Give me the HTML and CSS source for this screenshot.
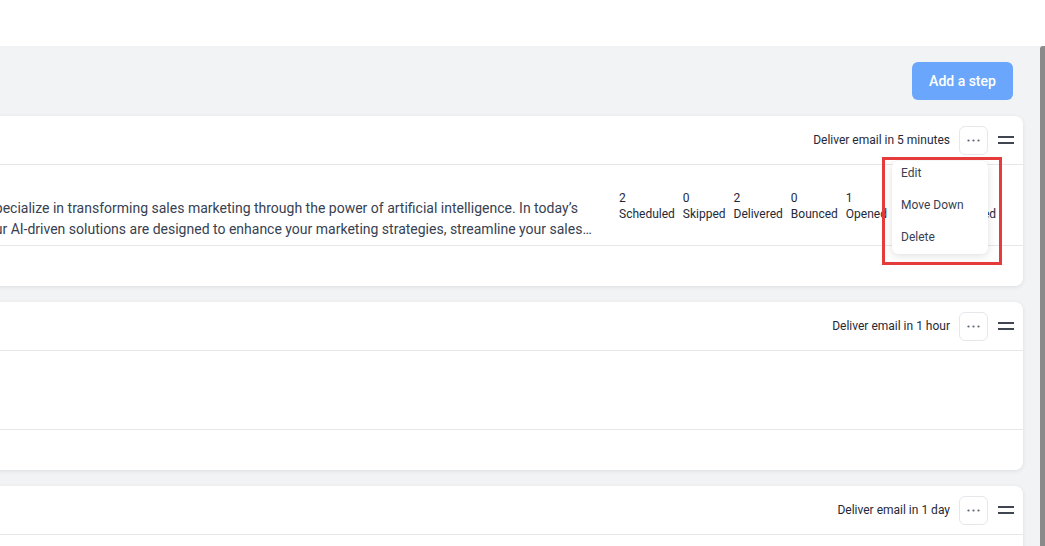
FILE: index.html
```html
<!DOCTYPE html>
<html lang="en">
<head>
<meta charset="utf-8">
<title>Sequence steps</title>
<link rel="stylesheet" href="styles.css">
</head>
<body>
<header class="topbar"></header>
<div class="main">
  <div class="content">
    <div class="toolbar">
      <button class="btn-primary" type="button">Add a step</button>
    </div>

    <section class="step">
      <div class="step-head">
        <span class="step-title">Step 1</span>
        <div class="step-actions">
          <span class="delay">Deliver email in 5 minutes</span>
          <div class="menu-wrap">
            <button class="icon-btn" type="button" aria-label="More">
              <svg width="13" height="3" viewBox="0 0 13 3"><circle cx="1.5" cy="1.5" r="1.1"/><circle cx="6.5" cy="1.5" r="1.1"/><circle cx="11.5" cy="1.5" r="1.1"/></svg>
            </button>
            <ul class="menu">
              <li class="menu-item">Edit</li>
              <li class="menu-item">Move Down</li>
              <li class="menu-item">Delete</li>
              <li class="highlight" aria-hidden="true"></li>
            </ul>
          </div>
          <span class="handle" aria-hidden="true"></span>
        </div>
      </div>
      <div class="step-body">
        <div class="email">
          <div class="subject">AI sales</div>
          <p class="preview">At Nexus AI Growth Labs, we specialize in transforming sales marketing through the power of artificial intelligence. In today’s fast-paced digital landscape, our AI-driven solutions are designed to enhance your marketing strategies, streamline your sales…</p>
        </div>
        <div class="stats">
          <div class="stat"><span>2</span><span>Scheduled</span></div>
          <div class="stat"><span>0</span><span>Skipped</span></div>
          <div class="stat"><span>2</span><span>Delivered</span></div>
          <div class="stat"><span>0</span><span>Bounced</span></div>
          <div class="stat"><span>1</span><span>Opened</span></div>
          <div class="stat"><span>0</span><span>Replied</span></div>
          <div class="stat"><span>0</span><span>Interested</span></div>
        </div>
      </div>
      <div class="step-foot"></div>
    </section>

    <section class="step">
      <div class="step-head">
        <span class="step-title">Step 2</span>
        <div class="step-actions">
          <span class="delay">Deliver email in 1 hour</span>
          <div class="menu-wrap">
            <button class="icon-btn" type="button" aria-label="More">
              <svg width="13" height="3" viewBox="0 0 13 3"><circle cx="1.5" cy="1.5" r="1.1"/><circle cx="6.5" cy="1.5" r="1.1"/><circle cx="11.5" cy="1.5" r="1.1"/></svg>
            </button>
          </div>
          <span class="handle" aria-hidden="true"></span>
        </div>
      </div>
      <div class="step-body"></div>
      <div class="step-foot"></div>
    </section>

    <section class="step">
      <div class="step-head">
        <span class="step-title">Step 3</span>
        <div class="step-actions">
          <span class="delay">Deliver email in 1 day</span>
          <div class="menu-wrap">
            <button class="icon-btn" type="button" aria-label="More">
              <svg width="13" height="3" viewBox="0 0 13 3"><circle cx="1.5" cy="1.5" r="1.1"/><circle cx="6.5" cy="1.5" r="1.1"/><circle cx="11.5" cy="1.5" r="1.1"/></svg>
            </button>
          </div>
          <span class="handle" aria-hidden="true"></span>
        </div>
      </div>
      <div class="step-body"></div>
      <div class="step-foot"></div>
    </section>
  </div>
  <div class="scrollbar"></div>
</div>
</body>
</html>
```
FILE: styles.css
```css
* { box-sizing: border-box; }

html, body {
  margin: 0;
  height: 100%;
  overflow: hidden;
}

body {
  font-family: Roboto, "Liberation Sans", Arial, sans-serif;
  color: #1f2937;
  background: #ffffff;
}

.topbar {
  height: 46px;
  background: #ffffff;
}

.main {
  display: flex;
  height: 500px;
  background: #f2f3f5;
  overflow: hidden;
}

.content {
  flex: 1;
  min-width: 0;
  margin-left: -211px;
  padding: 16px 17px 0 0;
  display: flex;
  flex-direction: column;
  gap: 16px;
}

.scrollbar {
  flex: 0 0 5px;
  background: #8a8a8a;
  border-radius: 3px 0 0 0;
}

.toolbar {
  display: flex;
  justify-content: flex-end;
  padding-right: 10px;
}

.btn-primary {
  height: 38px;
  width: 101px;
  border: 0;
  border-radius: 6px;
  background: #6aa7fc;
  color: #ffffff;
  font-family: inherit;
  font-size: 14px;
  font-weight: 500;
  padding: 0;
}

.step {
  flex: none;
  background: #ffffff;
  border-radius: 8px;
  box-shadow: 0 1px 4px rgba(0, 0, 0, 0.09);
}

.step-head {
  height: 49px;
  display: flex;
  align-items: center;
  justify-content: space-between;
  padding: 0 9px 0 16px;
  border-bottom: 1px solid #e5e7eb;
}

.step-title {
  font-size: 14px;
  font-weight: 500;
}

.step-actions {
  display: flex;
  align-items: center;
}

.delay {
  font-size: 12px;
  color: #1f2937;
  margin-right: 9px;
}

.menu-wrap {
  position: relative;
  margin-right: 10px;
}

.icon-btn {
  display: flex;
  align-items: center;
  justify-content: center;
  width: 29px;
  height: 29px;
  padding: 0;
  border: 1px solid #e5e7eb;
  border-radius: 6px;
  background: #ffffff;
  fill: #5b6370;
}

.handle {
  display: block;
  width: 16px;
  height: 8px;
  border-top: 2px solid #3f4652;
  border-bottom: 2px solid #3f4652;
}

.menu {
  position: absolute;
  top: 35px;
  right: 0;
  width: 96px;
  margin: 0;
  padding: 4px 0 9px;
  list-style: none;
  display: flex;
  flex-direction: column;
  gap: 16px;
  background: #ffffff;
  border-radius: 6px;
  box-shadow: 0 2px 8px rgba(0, 0, 0, 0.12), 0 0 1px rgba(0, 0, 0, 0.08);
  z-index: 5;
}

.menu-item {
  font-size: 12px;
  line-height: 16px;
  padding: 0 9px;
  color: #374151;
  white-space: nowrap;
}

.highlight {
  position: absolute;
  top: -4px;
  left: -10px;
  right: -14px;
  bottom: -11px;
  border: 3px solid #e53b3b;
  pointer-events: none;
}

.step-body {
  min-height: 79px;
  padding: 7px 16px 5px;
  display: flex;
  align-items: center;
  gap: 15px;
  border-bottom: 1px solid #e5e7eb;
}

.email {
  flex: 0 0 799px;
}

.subject {
  font-size: 14px;
  line-height: 20px;
  font-weight: 500;
  margin-bottom: 6px;
  color: #111827;
}

.preview {
  margin: 0;
  font-size: 14px;
  line-height: 21px;
  color: #374151;
}

.stats {
  display: flex;
  gap: 8px;
  white-space: nowrap;
}

.stat {
  display: flex;
  flex-direction: column;
  font-size: 12px;
  line-height: 16px;
  color: #1f2937;
}

.step-foot {
  height: 40px;
}
```
